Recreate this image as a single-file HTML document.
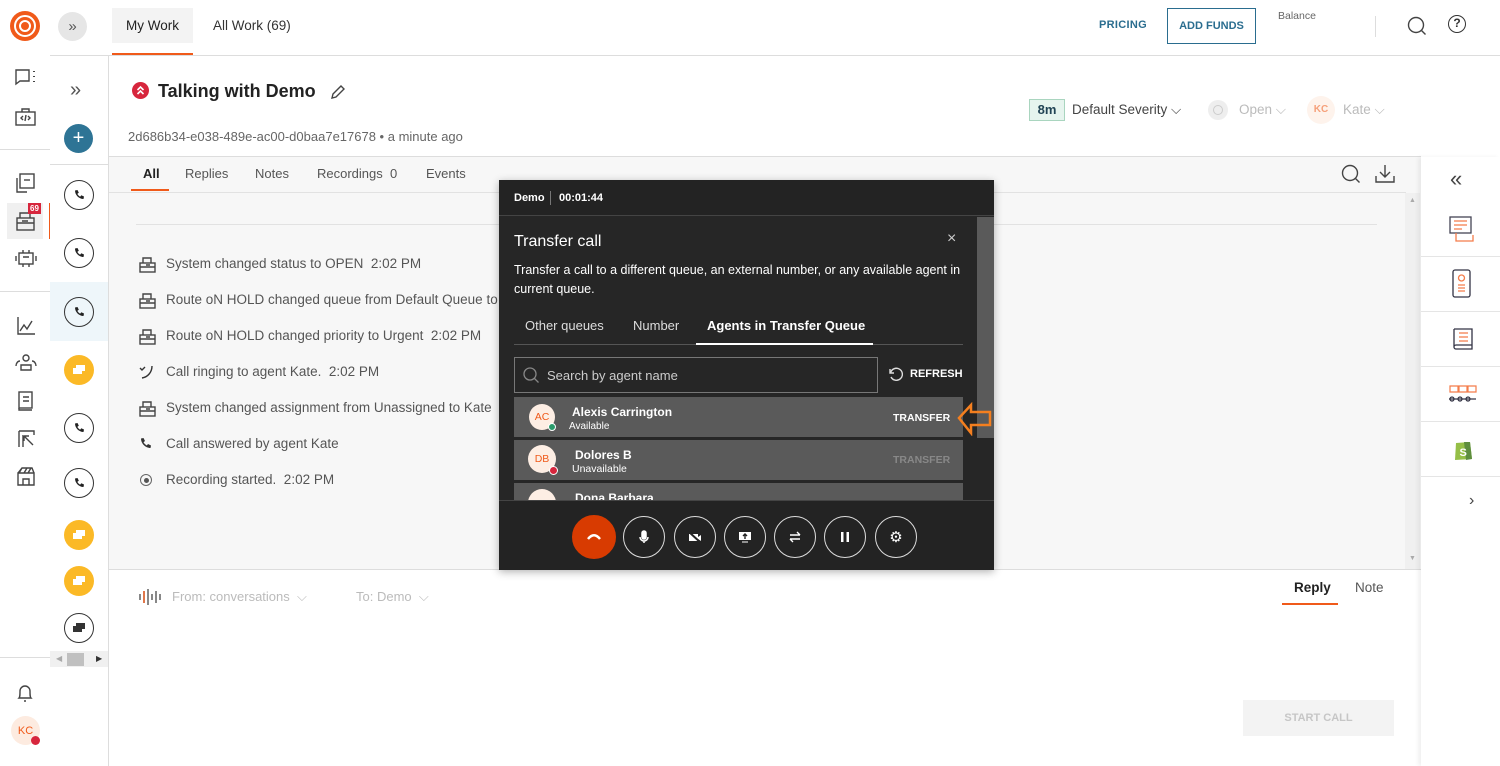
<!DOCTYPE html>
<html><head><meta charset="utf-8"><style>
*{box-sizing:border-box;margin:0;padding:0}
body{width:1500px;height:766px;overflow:hidden;background:#fff;font-family:"Liberation Sans",sans-serif;position:relative;color:#333}
.a{position:absolute}
.ic{position:absolute;stroke:#444;fill:none;stroke-width:1.4}
.circ{position:absolute;left:64px;width:30px;height:30px;border-radius:50%;border:1.3px solid #333;display:flex;align-items:center;justify-content:center}
.yel{position:absolute;left:64px;width:30px;height:30px;border-radius:50%;background:#fbb926;display:flex;align-items:center;justify-content:center}
.ev{position:absolute;left:166px;font-size:13.5px;color:#555;white-space:nowrap}
.evi{position:absolute;left:138px}
.btn{position:absolute;top:516px;width:42px;height:42px;border-radius:50%;border:1.3px solid #ddd;display:flex;align-items:center;justify-content:center}
</style></head><body>
<!-- left nav -->
<div class="a" style="left:10px;top:11px;width:30px;height:30px;border-radius:50%;background:#f05a1a"></div>
<div class="a" style="left:14px;top:15px;width:22px;height:22px;border-radius:50%;border:2.5px solid #fff"></div>
<div class="a" style="left:19px;top:20px;width:12px;height:12px;border-radius:50%;border:2.5px solid #fff"></div>
<svg class="ic" style="left:14px;top:68px" width="24" height="20"><path d="M2 2h13v11H6l-4 3z"/><path d="M20 3v1M20 8v1M20 13v1" stroke-width="2"/></svg>
<svg class="ic" style="left:14px;top:106px" width="24" height="22"><rect x="2" y="6" width="19" height="13"/><path d="M8 6V3h7v3M9 10l-2 2 2 2M14 10l2 2-2 2M12 9l-1 6"/></svg>
<div class="a" style="left:0;top:149px;width:50px;border-top:1px solid #ddd"></div>
<svg class="ic" style="left:14px;top:172px" width="24" height="24"><rect x="6" y="2" width="14" height="14"/><path d="M3 6v14h10"/><path d="M10 8h6"/></svg>
<div class="a" style="left:7px;top:203px;width:36px;height:36px;background:#f0f0f0"></div>
<div class="a" style="left:49px;top:203px;width:1px;height:36px;background:#f05a1a"></div>
<svg class="ic" style="left:14px;top:210px" width="24" height="22"><rect x="3" y="8" width="17" height="12"/><path d="M6 8V3h10v5M3 13h17M8 11h6"/></svg>
<div class="a" style="left:28px;top:203px;background:#d7263d;color:#fff;font-size:8px;font-weight:bold;padding:1px 2px">69</div>
<svg class="ic" style="left:14px;top:247px" width="24" height="22"><rect x="5" y="6" width="14" height="11"/><path d="M2 9v5M22 9v5M9 3v3M15 3v3M9 17v3M15 17v3M9 10h6"/></svg>
<div class="a" style="left:0;top:291px;width:50px;border-top:1px solid #ddd"></div>
<svg class="ic" style="left:15px;top:315px" width="22" height="22"><path d="M3 2v17h17M5 16l4-6 3 4 5-8"/></svg>
<svg class="ic" style="left:14px;top:352px" width="24" height="20"><circle cx="12" cy="6" r="3"/><path d="M7 18v-5h10v5zM2 14c0-3 2-5 4-5M22 14c0-3-2-5-4-5"/></svg>
<svg class="ic" style="left:16px;top:390px" width="20" height="22"><rect x="3" y="2" width="13" height="16"/><path d="M7 7h6M7 11h6M3 18v2h13"/></svg>
<svg class="ic" style="left:16px;top:428px" width="20" height="22"><path d="M3 3h15v4M3 3v16M7 7v12M8 8l9 9M8 8h5M8 8v5"/></svg>
<svg class="ic" style="left:15px;top:465px" width="22" height="22"><path d="M3 8h16v12H3zM3 8l4-5h10l2 5M8 20v-6h6v6M7 3l-3 5M12 3l-3 5M16 3l-3 5"/></svg>
<div class="a" style="left:0;top:657px;width:50px;border-top:1px solid #ddd"></div>
<svg class="ic" style="left:15px;top:682px" width="20" height="22"><path d="M4 16c1-1 1-3 1-7a5 5 0 0 1 10 0c0 4 0 6 1 7zM9 19h2"/></svg>
<div class="a" style="left:11px;top:716px;width:29px;height:29px;border-radius:50%;background:#fdebe0;color:#f05a1a;font-size:11px;display:flex;align-items:center;justify-content:center">KC</div>
<div class="a" style="left:31px;top:736px;width:9px;height:9px;border-radius:50%;background:#d7263d"></div>

<!-- top bar -->
<div class="a" style="left:58px;top:12px;width:29px;height:29px;border-radius:50%;background:#e6e6e6;color:#555;font-size:15px;display:flex;align-items:center;justify-content:center">»</div>
<div class="a" style="left:112px;top:8px;width:81px;height:35px;background:#f3f3f3"></div>
<div class="a" style="left:112px;top:53px;width:81px;height:2px;background:#f05a1a"></div>
<div class="a" style="left:126px;top:18px;font-size:13.5px;color:#222">My Work</div>
<div class="a" style="left:213px;top:18px;font-size:13.5px;color:#333">All Work (69)</div>
<div class="a" style="left:50px;top:55px;width:1450px;border-top:1px solid #ddd"></div>
<div class="a" style="left:1099px;top:19px;font-size:11px;color:#2a6d8f;font-weight:bold;letter-spacing:.3px">PRICING</div>
<div class="a" style="left:1167px;top:8px;width:89px;height:36px;border:1.3px solid #2a6d8f;color:#2a6d8f;font-size:11px;font-weight:bold;display:flex;align-items:center;justify-content:center">ADD FUNDS</div>
<div class="a" style="left:1278px;top:10px;font-size:10.5px;color:#666">Balance</div>
<div class="a" style="left:1375px;top:16px;width:1px;height:21px;background:#ddd"></div>
<svg class="ic" style="left:1406px;top:15px" width="22" height="22" stroke="#333"><circle cx="10" cy="10" r="7.5"/><path d="M15.5 15.5l4 4"/></svg>
<div class="a" style="left:1448px;top:15px;width:18px;height:18px;border-radius:50%;border:1.4px solid #333;font-size:12px;font-weight:bold;text-align:center;line-height:15px;color:#333">?</div>

<!-- second column -->
<div class="a" style="left:108px;top:56px;width:1px;height:710px;background:#ddd"></div>
<div class="a" style="left:70px;top:79px;font-size:20px;color:#555">»</div>
<div class="a" style="left:64px;top:124px;width:29px;height:29px;border-radius:50%;background:#2e7495;color:#fff;font-size:20px;text-align:center;line-height:28px">+</div>
<div class="a" style="left:50px;top:164px;width:58px;border-top:1px solid #ddd"></div>
<div class="a" style="left:50px;top:282px;width:58px;height:59px;background:#eef6fa"></div>
<div class="circ" style="top:180px"><svg width="12" height="12"><path d="M2 1.5l2.5-.5 1.3 2.7-1.5 1.2a7 7 0 0 0 2.8 2.8l1.2-1.5 2.7 1.3-.5 2.5C6 10 2 6 2 1.5z" fill="#222"/></svg></div>
<div class="circ" style="top:238px"><svg width="12" height="12"><path d="M2 1.5l2.5-.5 1.3 2.7-1.5 1.2a7 7 0 0 0 2.8 2.8l1.2-1.5 2.7 1.3-.5 2.5C6 10 2 6 2 1.5z" fill="#222"/></svg></div>
<div class="circ" style="top:297px"><svg width="12" height="12"><path d="M2 1.5l2.5-.5 1.3 2.7-1.5 1.2a7 7 0 0 0 2.8 2.8l1.2-1.5 2.7 1.3-.5 2.5C6 10 2 6 2 1.5z" fill="#222"/></svg></div>
<div class="yel" style="top:355px"><svg width="14" height="12" fill="#fff"><rect x="4" y="1" width="9" height="6"/><rect x="1" y="4" width="9" height="6"/></svg></div>
<div class="circ" style="top:413px"><svg width="12" height="12"><path d="M2 1.5l2.5-.5 1.3 2.7-1.5 1.2a7 7 0 0 0 2.8 2.8l1.2-1.5 2.7 1.3-.5 2.5C6 10 2 6 2 1.5z" fill="#222"/></svg></div>
<div class="circ" style="top:468px"><svg width="12" height="12"><path d="M2 1.5l2.5-.5 1.3 2.7-1.5 1.2a7 7 0 0 0 2.8 2.8l1.2-1.5 2.7 1.3-.5 2.5C6 10 2 6 2 1.5z" fill="#222"/></svg></div>
<div class="yel" style="top:520px"><svg width="14" height="12" fill="#fff"><rect x="4" y="1" width="9" height="6"/><rect x="1" y="4" width="9" height="6"/></svg></div>
<div class="yel" style="top:566px"><svg width="14" height="12" fill="#fff"><rect x="4" y="1" width="9" height="6"/><rect x="1" y="4" width="9" height="6"/></svg></div>
<div class="circ" style="top:613px"><svg width="14" height="12" fill="#333"><rect x="4" y="1" width="9" height="6"/><rect x="1" y="4" width="9" height="6"/></svg></div>
<div class="a" style="left:50px;top:651px;width:58px;height:16px;background:#f0f0f0"></div>
<div class="a" style="left:67px;top:653px;width:17px;height:13px;background:#c0c0c0"></div>
<div class="a" style="left:56px;top:654px;font-size:8px;color:#aaa">◀</div>
<div class="a" style="left:96px;top:654px;font-size:8px;color:#333">▶</div>

<!-- main header -->
<div class="a" style="left:132px;top:82px;width:17px;height:17px;border-radius:50%;background:#d7263d"></div>
<svg class="a" style="left:132px;top:82px" width="17" height="17" fill="none" stroke="#fff" stroke-width="1.6"><path d="M5.5 8l3-3 3 3M5.5 12l3-3 3 3"/></svg>
<div class="a" style="left:158px;top:81px;font-size:18px;font-weight:bold;color:#222">Talking with Demo</div>
<svg class="ic" style="left:330px;top:84px" width="16" height="16" stroke="#333"><path d="M2 14l1-4 8-8 3 3-8 8z"/></svg>
<div class="a" style="left:128px;top:129px;font-size:13px;color:#666">2d686b34-e038-489e-ac00-d0baa7e17678 • a minute ago</div>
<div class="a" style="left:1029px;top:99px;width:36px;height:22px;background:#e6f4ee;border:1px solid #a9d5bf;font-size:13px;font-weight:bold;color:#245;text-align:center;line-height:20px">8m</div>
<div class="a" style="left:1072px;top:102px;font-size:13.5px;color:#444">Default Severity ⌵</div>
<div class="a" style="left:1208px;top:100px;width:20px;height:20px;border-radius:50%;background:#eee"></div>
<div class="a" style="left:1213px;top:105px;width:10px;height:10px;border-radius:50%;border:1.5px solid #ccc"></div>
<div class="a" style="left:1239px;top:102px;font-size:13.5px;color:#bbb">Open ⌵</div>
<div class="a" style="left:1307px;top:96px;width:28px;height:28px;border-radius:50%;background:#fef3ec;color:#f6a07a;font-size:10px;font-weight:bold;text-align:center;line-height:28px">KC</div>
<div class="a" style="left:1343px;top:102px;font-size:13.5px;color:#bbb">Kate ⌵</div>

<!-- tabs & content -->
<div class="a" style="left:109px;top:156px;width:1312px;height:413px;background:#f7f7f7;border-top:1px solid #ddd"></div>
<div class="a" style="left:109px;top:192px;width:1297px;border-top:1px solid #e2e2e2"></div>
<div class="a" style="left:143px;top:166px;font-size:13px;color:#222;font-weight:bold">All</div>
<div class="a" style="left:131px;top:189px;width:38px;height:2px;background:#f05a1a"></div>
<div class="a" style="left:185px;top:166px;font-size:13px;color:#555">Replies</div>
<div class="a" style="left:255px;top:166px;font-size:13px;color:#555">Notes</div>
<div class="a" style="left:317px;top:166px;font-size:13px;color:#555">Recordings &nbsp;0</div>
<div class="a" style="left:426px;top:166px;font-size:13px;color:#555">Events</div>
<svg class="ic" style="left:1340px;top:163px" width="22" height="22" stroke="#333"><circle cx="10" cy="10" r="7.5"/><path d="M15.5 15.5l4 4"/></svg>
<svg class="ic" style="left:1374px;top:163px" width="22" height="22" stroke="#333"><path d="M11 2v12M6 9l5 5 5-5M2 13v6h18v-6"/></svg>
<div class="a" style="left:1405px;top:193px;width:15px;height:376px;background:#f0f0f0"></div>
<div class="a" style="left:1409px;top:197px;font-size:7px;color:#aaa">▲</div>
<div class="a" style="left:1409px;top:555px;font-size:7px;color:#aaa">▼</div>
<div class="a" style="left:136px;top:224px;width:1241px;border-top:1px solid #e2e2e2"></div>

<svg class="ic evi" style="top:256px" width="20" height="18"><rect x="2" y="7" width="15" height="9"/><path d="M5 7V2h8v5M2 11h15M8 9h4"/></svg>
<div class="ev" style="top:256px">System changed status to OPEN &nbsp;2:02 PM</div>
<svg class="ic evi" style="top:292px" width="20" height="18"><rect x="2" y="7" width="15" height="9"/><path d="M5 7V2h8v5M2 11h15M8 9h4"/></svg>
<div class="ev" style="top:292px">Route oN HOLD changed queue from Default Queue to d</div>
<svg class="ic evi" style="top:328px" width="20" height="18"><rect x="2" y="7" width="15" height="9"/><path d="M5 7V2h8v5M2 11h15M8 9h4"/></svg>
<div class="ev" style="top:328px">Route oN HOLD changed priority to Urgent &nbsp;2:02 PM</div>
<svg class="a" style="left:138px;top:364px" width="16" height="16" fill="none" stroke="#333" stroke-width="1.4"><path d="M2 4l2 2 3-3M14 2c0 6-4 11-10 12"/></svg>
<div class="ev" style="top:364px">Call ringing to agent Kate. &nbsp;2:02 PM</div>
<svg class="ic evi" style="top:400px" width="20" height="18"><rect x="2" y="7" width="15" height="9"/><path d="M5 7V2h8v5M2 11h15M8 9h4"/></svg>
<div class="ev" style="top:400px">System changed assignment from Unassigned to Kate</div>
<svg class="a" style="left:139px;top:437px" width="14" height="14"><path d="M2 1.5l2.5-.5 1.5 3-1.5 1.2a8 8 0 0 0 3.3 3.3l1.2-1.5 3 1.5-.5 2.5C6.5 11 2 6.5 2 1.5z" fill="#333"/></svg>
<div class="ev" style="top:436px">Call answered by agent Kate</div>
<div class="a" style="left:140px;top:474px;width:12px;height:12px;border-radius:50%;border:1.2px solid #666"></div>
<div class="a" style="left:143.5px;top:477.5px;width:5px;height:5px;border-radius:50%;background:#555"></div>
<div class="ev" style="top:472px">Recording started. &nbsp;2:02 PM</div>

<!-- composer -->
<div class="a" style="left:109px;top:569px;width:1312px;border-top:1px solid #ddd"></div>
<svg class="a" style="left:138px;top:587px" width="26" height="20" stroke-width="1.4"><path d="M2 7v6M6 4v12M10 2v16M14 7v6M18 4v12M22 7v6" stroke="#555"/><path d="M6 4v12" stroke="#f05a1a"/></svg>
<div class="a" style="left:172px;top:589px;font-size:13px;color:#bbb">From: conversations &nbsp;⌵</div>
<div class="a" style="left:356px;top:589px;font-size:13px;color:#bbb">To: Demo &nbsp;⌵</div>
<div class="a" style="left:1294px;top:580px;font-size:13.5px;color:#222;font-weight:bold">Reply</div>
<div class="a" style="left:1282px;top:603px;width:56px;height:2px;background:#f05a1a"></div>
<div class="a" style="left:1355px;top:580px;font-size:13.5px;color:#555">Note</div>
<div class="a" style="left:1243px;top:700px;width:151px;height:36px;background:#f3f3f3;color:#c6c6c6;font-size:11px;font-weight:bold;display:flex;align-items:center;justify-content:center">START CALL</div>

<!-- right panel -->
<div class="a" style="left:1421px;top:157px;width:79px;height:609px;background:#fff;box-shadow:-3px 0 4px rgba(0,0,0,.06)"></div>
<div class="a" style="left:1450px;top:166px;font-size:22px;color:#444">«</div>
<svg class="a" style="left:1448px;top:215px" width="28" height="28" fill="none" stroke-width="1.3"><rect x="2" y="2" width="21" height="16" stroke="#445"/><path d="M6 6h13M6 10h13M6 14h8M8 18v8h17v-6" stroke="#f47c4a"/></svg>
<div class="a" style="left:1421px;top:256px;width:79px;border-top:1px solid #e5e5e5"></div>
<svg class="a" style="left:1451px;top:268px" width="22" height="32" fill="none" stroke-width="1.3"><rect x="2" y="2" width="17" height="27" rx="2" stroke="#334"/><circle cx="10.5" cy="10" r="3" stroke="#f47c4a"/><path d="M7 17h7M7 20h7M7 23h7" stroke="#f47c4a"/></svg>
<div class="a" style="left:1421px;top:311px;width:79px;border-top:1px solid #e5e5e5"></div>
<svg class="a" style="left:1450px;top:325px" width="26" height="28" fill="none" stroke-width="1.3"><path d="M4 4h18v20H6a2 2 0 0 1 0-4h16M4 4v18" stroke="#334"/><path d="M9 8h9M9 12h9M9 16h9" stroke="#f47c4a"/></svg>
<div class="a" style="left:1421px;top:366px;width:79px;border-top:1px solid #e5e5e5"></div>
<svg class="a" style="left:1448px;top:384px" width="30" height="20" fill="none" stroke-width="1.2"><path d="M2 2h8v6H2zM11 2h8v6h-8zM20 2h8v6h-8z" stroke="#f47c4a"/><path d="M1 15h27M4 15m-2 0a2 2 0 1 0 4 0a2 2 0 1 0-4 0M12 15m-2 0a2 2 0 1 0 4 0a2 2 0 1 0-4 0M20 15m-2 0a2 2 0 1 0 4 0a2 2 0 1 0-4 0" stroke="#334"/></svg>
<div class="a" style="left:1421px;top:421px;width:79px;border-top:1px solid #e5e5e5"></div>
<svg class="a" style="left:1452px;top:437px" width="22" height="24"><path d="M4 6l14-1 2 17-17 1z" fill="#95bf47"/><path d="M12 5l6 0 2 17-6 1z" fill="#5e8e3e"/><text x="7.5" y="19" font-size="11" font-weight="bold" fill="#fff" font-family="Liberation Sans">S</text></svg>
<div class="a" style="left:1421px;top:476px;width:79px;border-top:1px solid #e5e5e5"></div>
<div class="a" style="left:1469px;top:492px;font-size:16px;color:#444">›</div>

<!-- modal -->
<div class="a" style="left:499px;top:180px;width:495px;height:390px;background:#262626;box-shadow:0 2px 8px rgba(0,0,0,.3)"></div>
<div class="a" style="left:499px;top:180px;width:495px;height:36px;background:#232323;border-bottom:1px solid #444"></div>
<div class="a" style="left:514px;top:192px;font-size:11px;color:#fff;font-weight:bold">Demo</div>
<div class="a" style="left:550px;top:191px;width:1px;height:14px;background:#777"></div>
<div class="a" style="left:559px;top:192px;font-size:11px;color:#fff;font-weight:bold">00:01:44</div>
<div class="a" style="left:977px;top:217px;width:17px;height:221px;background:#5a5a5a"></div>
<div class="a" style="left:514px;top:233px;font-size:16px;color:#fff">Transfer call</div>
<div class="a" style="left:947px;top:230px;font-size:16px;color:#ccc">×</div>
<div class="a" style="left:514px;top:261px;width:450px;font-size:12.5px;color:#fff;line-height:19px">Transfer a call to a different queue, an external number, or any available agent in current queue.</div>
<div class="a" style="left:525px;top:318px;font-size:13px;color:#ddd">Other queues</div>
<div class="a" style="left:633px;top:318px;font-size:13px;color:#ddd">Number</div>
<div class="a" style="left:707px;top:318px;font-size:13px;color:#fff;font-weight:bold">Agents in Transfer Queue</div>
<div class="a" style="left:514px;top:344px;width:449px;border-top:1px solid #555"></div>
<div class="a" style="left:696px;top:343px;width:177px;height:2px;background:#fff"></div>
<div class="a" style="left:514px;top:357px;width:364px;height:36px;border:1px solid #777"></div>
<svg class="a" style="left:522px;top:366px" width="18" height="18" fill="none" stroke="#888" stroke-width="1.3"><circle cx="8" cy="8" r="6"/><path d="M12.5 12.5l4 4"/></svg>
<div class="a" style="left:547px;top:368px;font-size:13px;color:#ccc">Search by agent name</div>
<svg class="a" style="left:887px;top:366px" width="16" height="16" fill="none" stroke="#ddd" stroke-width="1.4"><path d="M3 3v4h4M3.5 7A6 6 0 1 1 4 11"/></svg>
<div class="a" style="left:910px;top:368px;font-size:11px;color:#fff;font-weight:bold">REFRESH</div>
<div class="a" style="left:514px;top:397px;width:449px;height:40px;background:#5a5a5a"></div>
<div class="a" style="left:529px;top:404px;width:26px;height:26px;border-radius:50%;background:#fdeee4;color:#f05a1a;font-size:10.5px;text-align:center;line-height:26px">AC</div>
<div class="a" style="left:548px;top:423px;width:8px;height:8px;border-radius:50%;background:#2a9a6a;border:1px solid #fff"></div>
<div class="a" style="left:572px;top:405px;font-size:12px;color:#fff;font-weight:bold">Alexis Carrington</div>
<div class="a" style="left:569px;top:421px;font-size:10px;color:#fff">Available</div>
<div class="a" style="left:893px;top:412px;font-size:10.5px;color:#fff;font-weight:bold">TRANSFER</div>
<svg class="a" style="left:956px;top:402px" width="38" height="34"><path d="M3 16L15 3v7h19v13H15v8z" fill="none" stroke="#f47f1f" stroke-width="2.5"/></svg>
<div class="a" style="left:514px;top:440px;width:449px;height:40px;background:#5a5a5a"></div>
<div class="a" style="left:528px;top:445px;width:28px;height:28px;border-radius:50%;background:#fdeee4;color:#f05a1a;font-size:10.5px;text-align:center;line-height:28px">DB</div>
<div class="a" style="left:549px;top:466px;width:9px;height:9px;border-radius:50%;background:#d7263d;border:1px solid #fff"></div>
<div class="a" style="left:575px;top:448px;font-size:12px;color:#fff;font-weight:bold">Dolores B</div>
<div class="a" style="left:572px;top:463px;font-size:10.5px;color:#fff">Unavailable</div>
<div class="a" style="left:893px;top:454px;font-size:10.5px;color:#888;font-weight:bold">TRANSFER</div>
<div class="a" style="left:514px;top:483px;width:449px;height:17px;background:#5a5a5a;overflow:hidden">
<div class="a" style="left:14px;top:6px;width:28px;height:28px;border-radius:50%;background:#fdeee4"></div>
<div class="a" style="left:61px;top:8px;font-size:12px;color:#fff;font-weight:bold">Dona Barbara</div></div>
<div class="a" style="left:499px;top:500px;width:495px;height:70px;background:#232323;border-top:1px solid #444"></div>
<div class="btn" style="left:572px;background:#d83b01;border-color:#d83b01;width:44px;height:44px;top:515px"><svg width="14" height="8"><path d="M1 6c4-5 8-5 12 0" stroke="#fff" stroke-width="2.5" fill="none"/></svg></div>
<div class="btn" style="left:623px"><svg width="12" height="14" fill="none" stroke="#fff" stroke-width="1.5"><rect x="4" y="1" width="4" height="8" rx="2" fill="#fff"/><path d="M2 7a4 4 0 0 0 8 0M6 11v2"/></svg></div>
<div class="btn" style="left:674px"><svg width="14" height="12" fill="#fff"><rect x="1" y="3" width="9" height="7"/><path d="M10 6l3-2v6l-3-2z"/><path d="M1 1l12 11" stroke="#232323" stroke-width="2"/></svg></div>
<div class="btn" style="left:724px"><svg width="14" height="12"><rect x="1" y="1" width="12" height="8" fill="#fff"/><path d="M7 8V3M5 5l2-2 2 2" stroke="#232323" stroke-width="1.4" fill="none"/><path d="M4 11h6" stroke="#fff"/></svg></div>
<div class="btn" style="left:774px"><svg width="12" height="12" fill="none" stroke="#fff" stroke-width="1.4"><path d="M1 4h10M8 1l3 3M11 8H1M4 11L1 8"/></svg></div>
<div class="btn" style="left:824px"><svg width="10" height="12" fill="#fff"><rect x="1" y="1" width="2.5" height="10"/><rect x="6.5" y="1" width="2.5" height="10"/></svg></div>
<div class="btn" style="left:875px;color:#fff;font-size:15px">⚙</div>
</body></html>
